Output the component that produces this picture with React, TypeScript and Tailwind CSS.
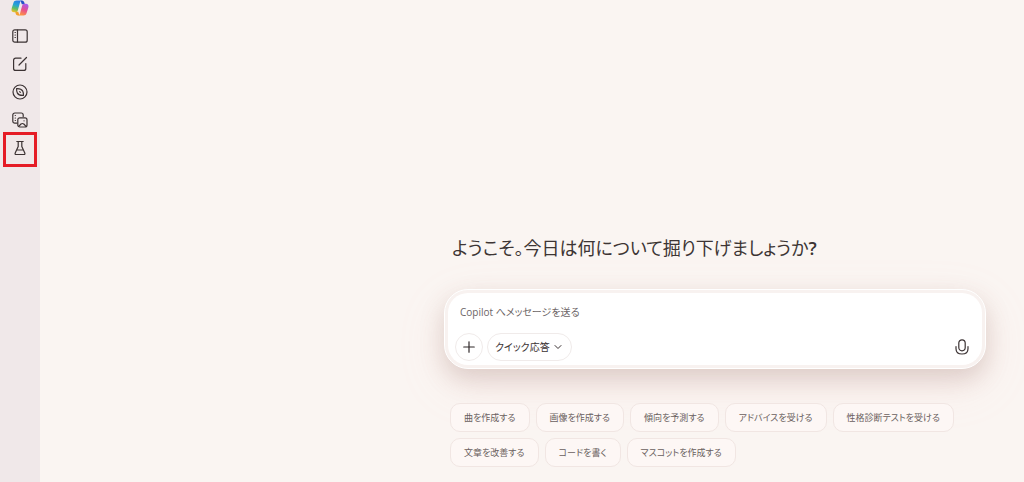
import React from 'react';
import { ChevronDown, Plus } from 'lucide-react';

const suggestions = [
  '曲を作成する',
  '画像を作成する',
  '傾向を予測する',
  'アドバイスを受ける',
  '性格診断テストを受ける',
  '文章を改善する',
  'コードを書く',
  'マスコットを作成する',
];

const CopilotLogo = () => (
  <svg viewBox="0 0 18 16" className="h-4 w-[18px]" aria-hidden="true">
    <defs>
      <linearGradient id="logoLeft" x1="0.6" y1="0" x2="0.3" y2="1">
        <stop offset="0" stopColor="#2a7de8" />
        <stop offset="0.4" stopColor="#25a5d4" />
        <stop offset="0.7" stopColor="#62bd62" />
        <stop offset="1" stopColor="#f0c228" />
      </linearGradient>
      <linearGradient id="logoRight" x1="0.7" y1="0" x2="0.3" y2="1">
        <stop offset="0" stopColor="#a45cf0" />
        <stop offset="0.5" stopColor="#e8508c" />
        <stop offset="1" stopColor="#ff9a3c" />
      </linearGradient>
    </defs>
    <path d="M9.500 .5H11c1.400 0 2 1 2.400 2.300l.4 1.400h-3z" fill="#2450c8" />
    <path d="M8.500 15.500H7c-1.400 0-2-1-2.400-2.300l-.4-1.400h3z" fill="#f5a02c" />
    <path d="M5.500 .5H11c-1 0-1.600.7-2 2L7 9.800c-.5 1.800-1.200 2.500-2.500 2.500H3.200C.8 12.300 0 10.600.7 8.200L2.400 3C3 1.200 3.900.5 5.500.5z" fill="url(#logoLeft)" />
    <path d="M12.500 15.500H7c1 0 1.600-.7 2-2l2-7.300c.5-1.800 1.200-2.500 2.500-2.500h1.300c2.400 0 3.200 1.700 2.500 4.100L15.600 13c-.6 1.800-1.500 2.500-3.100 2.500z" fill="url(#logoRight)" />
  </svg>
);

const Icon = ({ children }: { children: React.ReactNode }) => (
  <svg
    viewBox="0 0 16 16"
    className="size-4"
    fill="none"
    stroke="currentColor"
    strokeWidth="1.2"
    strokeLinecap="round"
    strokeLinejoin="round"
    aria-hidden="true"
  >
    {children}
  </svg>
);

const navItems = [
  {
    label: 'サイドバーを開く',
    icon: (
      <Icon>
        <rect x="0.8" y="1.800" width="14.400" height="12.400" rx="2" />
        <path d="M5.500 2v12M3 4.500h.4M3 7h.4M3 9.500h.4" />
      </Icon>
    ),
  },
  {
    label: '新しいチャット',
    icon: (
      <Icon>
        <path d="M9 2.200H3.600a2 2 0 0 0-2 2v8.200a2 2 0 0 0 2 2h8.200a2 2 0 0 0 2-2V7.500M7 9l7.500-7.500" />
      </Icon>
    ),
  },
  {
    label: '発見',
    icon: (
      <Icon>
        <circle cx="8" cy="8" r="7" />
        <path d="M4.600 4.600c2.700-.2 5 .6 6 2.300.7 1.200.9 2.700.8 4.500-2.700.2-5-.6-6-2.300-.7-1.200-.9-2.700-.8-4.500zM7.700 7.700l.6.600" />
      </Icon>
    ),
  },
  {
    label: 'ライブラリ',
    icon: (
      <Icon>
        <path d="M5 11.200H2.800a2 2 0 0 1-2-2V3a2 2 0 0 1 2-2h6.400a2 2 0 0 1 2 2v1.500M3.200 3.500h.2M3.200 6h.2M3.200 8.500h.2" />
        <rect x="5.800" y="5.800" width="9.200" height="9.200" rx="2" />
        <path d="m7 14.200 2-2.200q1.400-1 2.800 0l2 2.200M12 8.800h.1" />
      </Icon>
    ),
  },
  {
    label: 'ラボ',
    highlighted: true,
    icon: (
      <Icon>
        <path d="M4.800 1.500h6.400M6.200 1.500v5L3.200 13c-.4.900 0 1.500.8 1.500h8c.8 0 1.200-.6.800-1.500l-3-6.500v-5M4.900 10h6.200" />
      </Icon>
    ),
  },
];

const Sidebar = () => (
  <aside className="flex w-10 shrink-0 flex-col items-center bg-[#f0e8e9] text-[#3b3233]">
    <a href="#" aria-label="Copilot" className="mb-3">
      <CopilotLogo />
    </a>
    <nav className="flex flex-col items-center gap-3">
      {navItems.map((item) => (
        <button key={item.label} type="button" aria-label={item.label} className="relative block">
          {item.icon}
          {item.highlighted && (
            <span className="absolute -inset-x-[9px] -top-2 -bottom-[11px] border-[3px] border-[#e51c26]"></span>
          )}
        </button>
      ))}
    </nav>
  </aside>
);

const Composer = () => (
  <form
    className="rounded-3xl border border-white bg-[#f8f2f0] p-[3px] shadow-[0_10px_24px_rgba(120,80,70,0.22),0_16px_48px_rgba(255,190,185,0.15)]"
    onSubmit={(e) => e.preventDefault()}
  >
    <div className="rounded-[20px] bg-white px-[7px] pt-[7px] pb-1">
      <input
        type="text"
        aria-label="メッセージ"
        placeholder="Copilot へメッセージを送る"
        className="block h-6 w-full px-[5px] text-[10px] outline-none placeholder:text-[#6c6566]"
      />
      <div className="mt-[9px] flex items-center">
        <button
          type="button"
          aria-label="追加"
          className="flex size-7 items-center justify-center rounded-full border border-[#f0ebea] text-[#2f2829]"
        >
          <Plus className="size-[18px]" strokeWidth={1.6} />
        </button>
        <button
          type="button"
          className="ml-1 flex h-7 items-center gap-0.5 rounded-full border border-[#f0ebea] px-[7px] text-[10px] text-[#3b3233]"
        >
          クイック応答
          <ChevronDown className="size-3" strokeWidth={2} />
        </button>
        <button type="button" aria-label="音声入力" className="mr-[5px] ml-auto text-[#3b3233]">
          <Icon>
            <rect x="4.800" y="0.800" width="6.400" height="11" rx="3.200" />
            <path d="M2 7.500v2.200c0 3.300 2.500 5.300 6 5.300s6-2 6-5.300V7.500" />
          </Icon>
        </button>
      </div>
    </div>
  </form>
);

const App = () => (
  <div className="flex min-h-screen bg-[#faf5f2] [font-family:'Open_Sans','Noto_Sans_CJK_JP',sans-serif] [font-feature-settings:'palt']">
    <Sidebar />
    <main className="grid flex-1 grid-cols-[404fr_542fr_38fr] content-start pt-[232px]">
      <div className="col-start-2">
        <h1 className="px-2 text-[18px] leading-8 text-[#3d3534]">
          ようこそ。今日は何について掘り下げましょうか<span className="font-semibold">?</span>
        </h1>
        <div className="mt-[25px]">
          <Composer />
        </div>
        <div className="mt-[34px] flex flex-wrap gap-1.5 px-1.5">
          {suggestions.map((text) => (
            <button
              key={text}
              type="button"
              className="h-[29px] rounded-[10px] border border-[#f1e6e3] bg-[#fdf7f5] px-[13px] text-[9px] text-[#6a5f5e]"
            >
              {text}
            </button>
          ))}
        </div>
      </div>
    </main>
  </div>
);

export default App;
